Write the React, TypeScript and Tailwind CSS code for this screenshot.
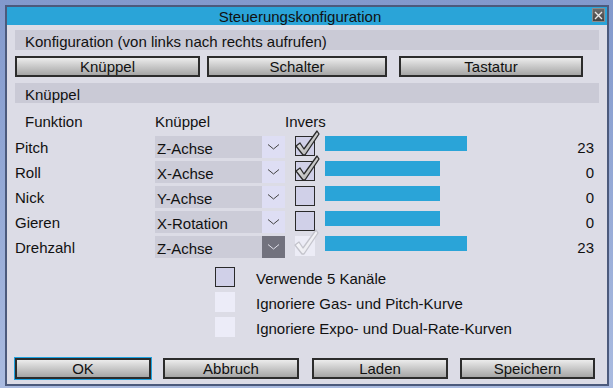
import React from "react";

type Row = {
  name: string;
  axis: string;
  inverted: boolean;
  bar: number;
  value: number;
  active?: boolean;
};

const rows: Row[] = [
  { name: "Pitch", axis: "Z-Achse", inverted: true, bar: 142, value: 23 },
  { name: "Roll", axis: "X-Achse", inverted: true, bar: 115, value: 0 },
  { name: "Nick", axis: "Y-Achse", inverted: false, bar: 115, value: 0 },
  { name: "Gieren", axis: "X-Rotation", inverted: false, bar: 115, value: 0 },
  { name: "Drehzahl", axis: "Z-Achse", inverted: true, bar: 142, value: 23, active: true },
];

const Check = ({ faded }: { faded?: boolean }) => (
  <svg
    width="26"
    height="27"
    viewBox="0 0 26 27"
    className="absolute left-[-2px] top-[-7px] pointer-events-none"
  >
    <defs>
      <linearGradient id={faded ? "ckf" : "ck"} x1="0" y1="0" x2="1" y2="1">
        <stop offset="0" stopColor="#ffffff" />
        <stop offset="1" stopColor={faded ? "#e4e4ec" : "#9a9a9a"} />
      </linearGradient>
    </defs>
    <path
      d="M2 16 L6 13 L10 19 L23 1 L25 4 L11 25 L9 25 Z"
      fill={`url(#${faded ? "ckf" : "ck"})`}
      stroke={faded ? "#c4c4cc" : "#2a2a2a"}
      strokeWidth="1.3"
      strokeLinejoin="round"
    />
  </svg>
);

const Chevron = ({ light }: { light?: boolean }) => (
  <svg width="13" height="8" viewBox="0 0 13 8">
    <path d="M1 1.5 L6.5 6 L12 1.5" fill="none" stroke={light ? "#e0e0ea" : "#444"} strokeWidth="1" />
  </svg>
);

const Btn = ({ label, w, focus }: { label: string; w: string; focus?: boolean }) => (
  <div className={`${w} ${focus ? "p-px bg-[#1ea2e0]" : "p-px"} shrink-0`}>
    <div className="h-[21px] border-2 border-[#2c2c2c] bg-gradient-to-b from-[#ececec] to-[#a6a6a6] flex items-center justify-center text-[15px] text-[#111] leading-none">
      {label}
    </div>
  </div>
);

export default function App() {
  return (
    <div
      className="w-[613px] h-[388px] overflow-hidden bg-gradient-to-b from-[#8299cc] to-[#aabbe0] pt-[5px] pl-[5px] pr-[4px]"
      style={{ fontFamily: '"Liberation Sans", Arial, sans-serif' }}
    >
      <div className="w-[604px] h-[381px] border-2 border-[#4c5a7c] bg-[#dcdce6] flex flex-col">
        {/* title bar */}
        <div className="h-[18px] bg-[#2aa4d8] relative flex items-center justify-center pr-[14px] text-[15px] text-[#111] leading-none">
          Steuerungskonfiguration
          <div className="absolute right-[2px] top-[1px] w-[13px] h-[14px] bg-gradient-to-b from-[#6a6a6a] to-[#444] border border-[#8a8a8a] flex items-center justify-center">
            <svg width="9" height="9" viewBox="0 0 9 9">
              <path d="M1 1 L8 8 M8 1 L1 8" stroke="#e8e8e8" strokeWidth="1.4" />
            </svg>
          </div>
        </div>

        <div className="flex-1 px-2 pt-[5px] flex flex-col text-[15px] text-[#111] leading-none">
          <div className="h-[20px] bg-[#cacad6] flex items-center pl-[10px] pr-[8px] pt-[2px]">
            Konfiguration (von links nach rechts aufrufen)
          </div>

          <div className="flex mt-[5px] ml-[-1px]">
            <Btn label="Knüppel" w="w-[187px]" />
            <div className="w-[5px]" />
            <Btn label="Schalter" w="w-[182px]" />
            <div className="w-[10px]" />
            <Btn label="Tastatur" w="w-[186px]" />
          </div>

          <div className="h-[20px] bg-[#cacad6] flex items-center pl-[10px] pt-[2px] mt-[5px]">Knüppel</div>

          <div className="flex items-center h-[33px] pt-[3px]">
            <div className="w-[140px] pl-[10px]">Funktion</div>
            <div className="w-[130px]">Knüppel</div>
            <div>Invers</div>
          </div>

          {rows.map((r) => (
            <div key={r.name} className="flex items-start h-[25px]">
              <div className="w-[140px] h-[22px] flex items-center pt-px">{r.name}</div>
              <div className="flex w-[130px] h-[22px]">
                <div className="w-[107px] bg-[#ccccd8] flex items-center pl-[2px] pt-[2px]">{r.axis}</div>
                <div
                  className={`flex-1 flex items-center justify-center ${
                    r.active ? "bg-[#72727e]" : "bg-[#dedef4]"
                  }`}
                >
                  <Chevron light={r.active} />
                </div>
              </div>
              <div
                className={`relative ml-[10px] w-[20px] h-[20px] ${
                  r.active ? "bg-[#ececf6]" : "bg-[#d0d0e8] border border-[#2a2a2a]"
                }`}
              >
                {r.inverted && <Check faded={r.active} />}
              </div>
              <div className="ml-[10px] h-[15px] bg-[#2aa4d8]" style={{ width: r.bar }} />
              <div className="flex-1 h-[22px] flex items-center justify-end pr-[5px] pt-px">{r.value}</div>
            </div>
          ))}

          <div className="flex flex-col mt-[6px] pl-[200px] gap-[5px]">
            <div className="flex items-center h-[20px]">
              <div className="w-[20px] h-[20px] bg-[#d0d0e8] border border-[#2a2a2a]" />
              <span className="ml-[21px] pt-[2px]">Verwende 5 Kanäle</span>
            </div>
            <div className="flex items-center h-[20px]">
              <div className="w-[20px] h-[20px] bg-[#ececf8]" />
              <span className="ml-[21px] pt-[2px]">Ignoriere Gas- und Pitch-Kurve</span>
            </div>
            <div className="flex items-center h-[20px]">
              <div className="w-[20px] h-[20px] bg-[#ececf8]" />
              <span className="ml-[21px] pt-[2px]">Ignoriere Expo- und Dual-Rate-Kurven</span>
            </div>
          </div>

          <div className="flex mt-[20px] ml-[-1px]">
            <Btn label="OK" w="w-[138px]" focus />
            <div className="w-[10px]" />
            <Btn label="Abbruch" w="w-[138px]" />
            <div className="w-[11px]" />
            <Btn label="Laden" w="w-[138px]" />
            <div className="w-[10px]" />
            <Btn label="Speichern" w="w-[137px]" />
          </div>
        </div>
      </div>
    </div>
  );
}
